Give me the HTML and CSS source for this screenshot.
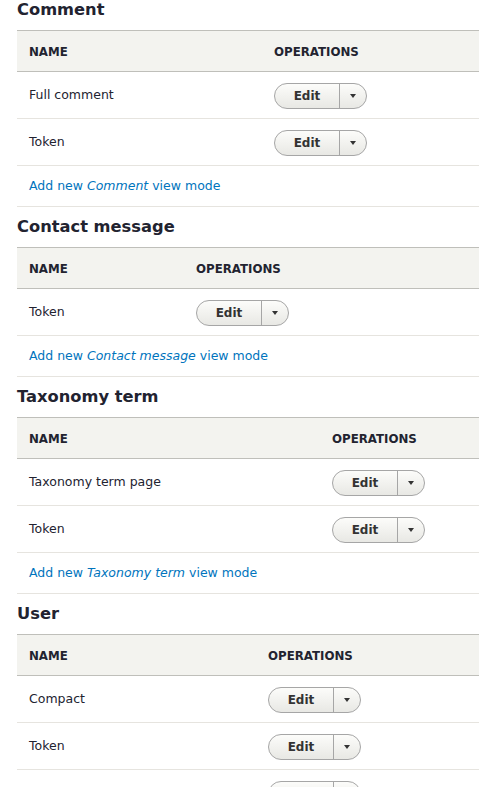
FILE: index.html
```html
<!DOCTYPE html>
<html>
<head>
<meta charset="utf-8">
<link rel="stylesheet" href="styles.css">
</head>
<body>
<div class="page">
  <section class="section t-comment">
    <h2 class="title">Comment</h2>
    <table class="modes">
      <thead>
        <tr><th class="col-name">Name</th><th>Operations</th></tr>
      </thead>
      <tbody>
        <tr><td class="col-name">Full comment</td><td><span class="dropbutton"><span class="db-main">Edit</span><span class="db-toggle"><i class="caret"></i></span></span></td></tr>
        <tr><td class="col-name">Token</td><td><span class="dropbutton"><span class="db-main">Edit</span><span class="db-toggle"><i class="caret"></i></span></span></td></tr>
        <tr class="add-row"><td colspan="2"><a href="#">Add new <em>Comment</em> view mode</a></td></tr>
      </tbody>
    </table>
  </section>

  <section class="section t-contact">
    <h2 class="title">Contact message</h2>
    <table class="modes">
      <thead>
        <tr><th class="col-name">Name</th><th>Operations</th></tr>
      </thead>
      <tbody>
        <tr><td class="col-name">Token</td><td><span class="dropbutton"><span class="db-main">Edit</span><span class="db-toggle"><i class="caret"></i></span></span></td></tr>
        <tr class="add-row"><td colspan="2"><a href="#">Add new <em>Contact message</em> view mode</a></td></tr>
      </tbody>
    </table>
  </section>

  <section class="section t-taxonomy">
    <h2 class="title">Taxonomy term</h2>
    <table class="modes">
      <thead>
        <tr><th class="col-name">Name</th><th>Operations</th></tr>
      </thead>
      <tbody>
        <tr><td class="col-name">Taxonomy term page</td><td><span class="dropbutton"><span class="db-main">Edit</span><span class="db-toggle"><i class="caret"></i></span></span></td></tr>
        <tr><td class="col-name">Token</td><td><span class="dropbutton"><span class="db-main">Edit</span><span class="db-toggle"><i class="caret"></i></span></span></td></tr>
        <tr class="add-row"><td colspan="2"><a href="#">Add new <em>Taxonomy term</em> view mode</a></td></tr>
      </tbody>
    </table>
  </section>

  <section class="section t-user">
    <h2 class="title">User</h2>
    <table class="modes">
      <thead>
        <tr><th class="col-name">Name</th><th>Operations</th></tr>
      </thead>
      <tbody>
        <tr><td class="col-name">Compact</td><td><span class="dropbutton"><span class="db-main">Edit</span><span class="db-toggle"><i class="caret"></i></span></span></td></tr>
        <tr><td class="col-name">Token</td><td><span class="dropbutton"><span class="db-main">Edit</span><span class="db-toggle"><i class="caret"></i></span></span></td></tr>
        <tr><td class="col-name">User account</td><td><span class="dropbutton"><span class="db-main">Edit</span><span class="db-toggle"><i class="caret"></i></span></span></td></tr>
      </tbody>
    </table>
  </section>
</div>
</body>
</html>
```

FILE: styles.css
```css
html, body {
  margin: 0;
  padding: 0;
  background: #ffffff;
}
body {
  font-family: "DejaVu Sans", "Liberation Sans", sans-serif;
  font-size: 12.5px;
  color: #222330;
  overflow: hidden;
}
.page {
  padding-left: 17px;
}
.title {
  margin: 0 0 10px 0;
  padding-top: 10px;
  font-size: 16.3px;
  line-height: 20px;
  font-weight: bold;
  color: #222330;
}
.section:first-child .title {
  padding-top: 0;
}
.modes {
  width: 462px;
  border-collapse: collapse;
  table-layout: fixed;
}
.modes th {
  box-sizing: border-box;
  height: 41px;
  padding: 2px 12px 0 12px;
  background: #f3f3ef;
  border-top: 1px solid #bfbfba;
  border-bottom: 1px solid #bfbfba;
  text-align: left;
  vertical-align: middle;
  text-transform: uppercase;
  font-size: 11.8px;
  font-weight: bold;
  color: #222330;
}
.modes td {
  height: 46px;
  padding: 0 12px;
  border-bottom: 1px solid #e6e4df;
  vertical-align: middle;
  line-height: 16px;
}
.modes .add-row td {
  height: 40px;
}
.modes a {
  color: #0074bd;
  text-decoration: none;
}
.t-comment .col-name { width: 245px; }
.t-contact .col-name { width: 167px; }
.t-taxonomy .col-name { width: 303px; }
.t-user .col-name { width: 239px; }

.dropbutton {
  display: inline-flex;
  align-items: stretch;
  height: 26px;
  box-sizing: border-box;
  border: 1px solid #a6a6a6;
  border-radius: 13px;
  background: linear-gradient(to bottom, #fcfcfa, #e8e8e4);
  vertical-align: middle;
  margin-top: 1px;
}
.db-main {
  display: flex;
  align-items: center;
  justify-content: center;
  width: 64px;
  font-size: 12px;
  font-weight: bold;
  color: #333333;
  border-right: 1px solid #a6a6a6;
}
.db-toggle {
  display: flex;
  align-items: center;
  justify-content: center;
  width: 26px;
}
.caret {
  display: block;
  width: 0;
  height: 0;
  border-left: 3.5px solid transparent;
  border-right: 3.5px solid transparent;
  border-top: 4px solid #333333;
  margin-right: 1px;
}
```
